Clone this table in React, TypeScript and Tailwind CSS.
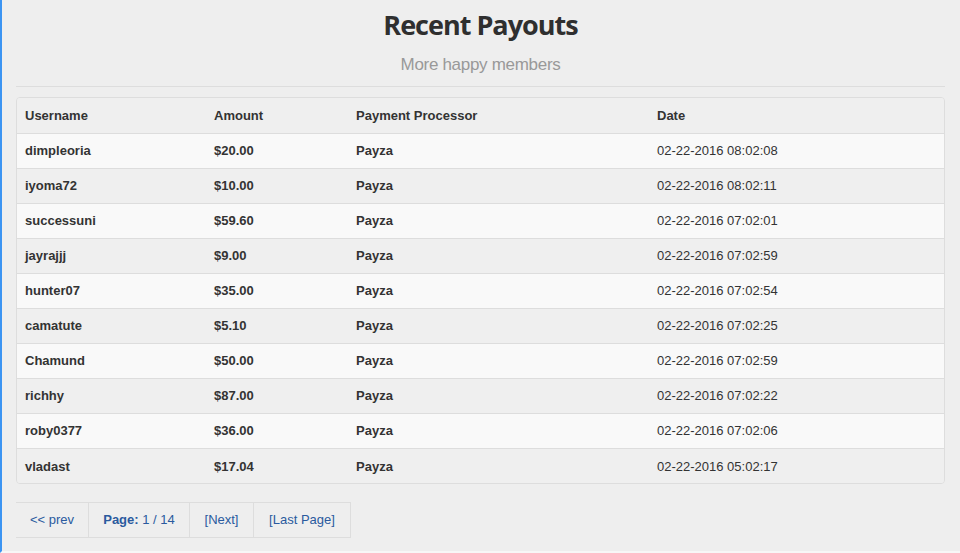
import React from "react";

const rows = [
  ["dimpleoria", "$20.00", "Payza", "02-22-2016 08:02:08"],
  ["iyoma72", "$10.00", "Payza", "02-22-2016 08:02:11"],
  ["successuni", "$59.60", "Payza", "02-22-2016 07:02:01"],
  ["jayrajjj", "$9.00", "Payza", "02-22-2016 07:02:59"],
  ["hunter07", "$35.00", "Payza", "02-22-2016 07:02:54"],
  ["camatute", "$5.10", "Payza", "02-22-2016 07:02:25"],
  ["Chamund", "$50.00", "Payza", "02-22-2016 07:02:59"],
  ["richhy", "$87.00", "Payza", "02-22-2016 07:02:22"],
  ["roby0377", "$36.00", "Payza", "02-22-2016 07:02:06"],
  ["vladast", "$17.04", "Payza", "02-22-2016 05:02:17"],
];

export default function App() {
  return (
    <div
      className="w-[960px] h-[553px] bg-[#eeeeee] border-l-2 border-l-[#3b94f2] border-b-2 border-b-[#f7f7f7] text-[#333333] overflow-hidden"
      style={{ fontFamily: '"Liberation Sans", Arial, sans-serif' }}
    >
      <div className="pl-[14px] pr-[15px]">
        <h1
          className="text-center text-[27px] font-bold leading-none pt-[11px] tracking-[-1px] text-[#2f2f2f]"
          style={{ fontFamily: '"Open Sans", sans-serif' }}
        >
          Recent Payouts
        </h1>
        <p className="text-center text-[17px] leading-none mt-[18px] text-[#999999] tracking-[-0.3px]">
          More happy members
        </p>
        <div className="mt-[13px] border-t border-[#dddddd]" />
        <div className="mt-[10px] border border-[#dddddd] rounded-[4px] overflow-hidden">
          <table className="w-full table-fixed border-collapse text-[13px]">
            <colgroup>
              <col className="w-[189px]" />
              <col className="w-[142px]" />
              <col className="w-[301px]" />
              <col />
            </colgroup>
            <thead>
              <tr className="h-[35px] bg-[#efefef]">
                <th className="text-left font-bold px-[8px] pt-[1px]">Username</th>
                <th className="text-left font-bold px-[8px] pt-[1px]">Amount</th>
                <th className="text-left font-bold px-[8px] pt-[1px]">Payment Processor</th>
                <th className="text-left font-bold px-[8px] pt-[1px]">Date</th>
              </tr>
            </thead>
            <tbody>
              {rows.map((r, i) => (
                <tr
                  key={i}
                  className={`h-[35px] border-t border-[#dddddd] ${i % 2 === 0 ? "bg-[#f9f9f9]" : "bg-[#efefef]"}`}
                >
                  <td className="px-[8px] pt-[1px] font-bold">{r[0]}</td>
                  <td className="px-[8px] pt-[1px] font-bold">{r[1]}</td>
                  <td className="px-[8px] pt-[1px] font-bold">{r[2]}</td>
                  <td className="px-[8px] pt-[1px]">{r[3]}</td>
                </tr>
              ))}
            </tbody>
          </table>
        </div>
        <div className="mt-[18px] flex">
          <div className="flex h-[36px] border-y border-[#dddddd] text-[13px] text-[#2a5a9e] whitespace-nowrap">
            <div className="flex items-center justify-center border-r border-[#dddddd] w-[73px]">&lt;&lt; prev</div>
            <div className="flex items-center justify-center border-r border-[#dddddd] w-[101px]">
              <span className="font-bold">Page:</span>&nbsp;1 / 14
            </div>
            <div className="flex items-center justify-center border-r border-[#dddddd] w-[64px]">[Next]</div>
            <div className="flex items-center justify-center border-r border-[#dddddd] w-[97px]">[Last Page]</div>
          </div>
        </div>
      </div>
    </div>
  );
}
